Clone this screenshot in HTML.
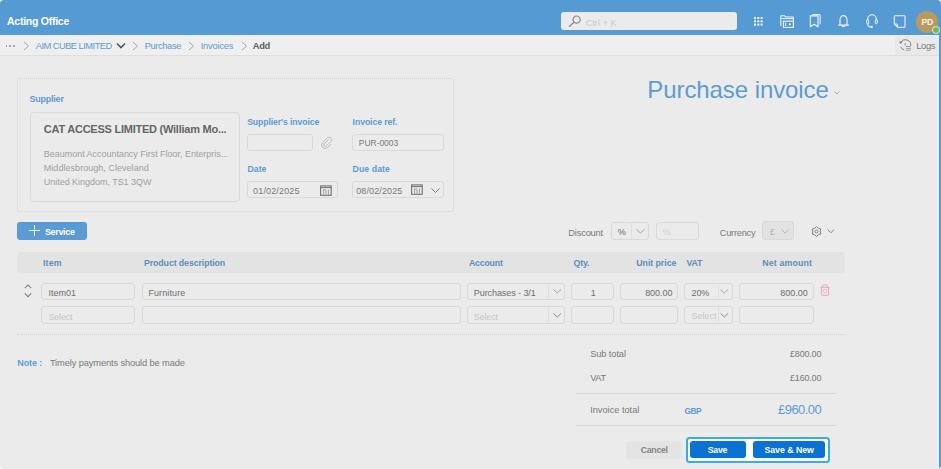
<!DOCTYPE html>
<html><head><meta charset="utf-8"><style>
html,body{margin:0;padding:0;}
body{width:941px;height:469px;overflow:hidden;background:#ffffff;font-family:"Liberation Sans",sans-serif;position:relative;}
.t{position:absolute;white-space:nowrap;}
.r{position:absolute;box-sizing:border-box;}
svg.r{overflow:visible;}
#pg{position:absolute;left:0;top:0;width:941px;height:469px;overflow:hidden;background:#ebebeb;border-radius:4px;}
</style></head><body><div id="pg">
<div class="r" style="left:0px;top:0px;width:941px;height:35px;background:#569ad3;"></div>
<div class="t" style="left:7.00px;top:16.00px;font-size:10.5px;line-height:10.5px;letter-spacing:-0.257px;color:#ffffff;font-weight:bold;">Acting Office</div>
<div class="r" style="left:561px;top:12.3px;width:176px;height:17.9px;background:#ebebeb;border-radius:3px;"></div>
<svg class="r" style="left:568px;top:15px" width="14" height="12" viewBox="0 0 14 12"><circle cx="8.6" cy="4.6" r="3.6" fill="none" stroke="#8a8a8a" stroke-width="1.2"/><line x1="6" y1="7.3" x2="1.5" y2="11.3" stroke="#8a8a8a" stroke-width="1.3" stroke-linecap="round"/></svg>
<div class="t" style="left:585.70px;top:19.00px;font-size:9px;line-height:9px;letter-spacing:0.093px;color:#c8c8c8;font-weight:normal;">Ctrl + K</div>
<svg class="r" style="left:753px;top:15.5px" width="11" height="11" viewBox="0 0 11 11"><rect x="1.0" y="1.0" width="2" height="2" fill="#f4f7fb"/><rect x="1.0" y="4.3" width="2" height="2" fill="#f4f7fb"/><rect x="1.0" y="7.6" width="2" height="2" fill="#f4f7fb"/><rect x="4.3" y="1.0" width="2" height="2" fill="#f4f7fb"/><rect x="4.3" y="4.3" width="2" height="2" fill="#f4f7fb"/><rect x="4.3" y="7.6" width="2" height="2" fill="#f4f7fb"/><rect x="7.6" y="1.0" width="2" height="2" fill="#f4f7fb"/><rect x="7.6" y="4.3" width="2" height="2" fill="#f4f7fb"/><rect x="7.6" y="7.6" width="2" height="2" fill="#f4f7fb"/></svg>
<svg class="r" style="left:779.5px;top:14.5px" width="15" height="13" viewBox="0 0 15 13"><path d="M0.8 11 V1.3 Q0.8 0.7 1.4 0.7 H4.3 L5.6 1.9 H12.6 Q13.4 1.9 13.4 2.7 V12.3" fill="none" stroke="#f4f7fb" stroke-width="1.05"/><line x1="1.6" y1="3.6" x2="13.4" y2="3.6" stroke="#f4f7fb" stroke-width="1"/><rect x="3.4" y="6.2" width="10" height="6.2" fill="none" stroke="#f4f7fb" stroke-width="1.05"/><line x1="5.6" y1="7.6" x2="5.6" y2="11" stroke="#f4f7fb" stroke-width="1"/><circle cx="9.8" cy="9.3" r="1" fill="#f4f7fb"/></svg>
<svg class="r" style="left:808.5px;top:14px" width="13" height="14" viewBox="0 0 13 14"><path d="M1.3 12.8 V1.9 H9 V12.8 L5.15 10.2 Z" fill="none" stroke="#f4f7fb" stroke-width="1.1" stroke-linejoin="round"/><path d="M3.2 0.6 H11.1 V10.3" fill="none" stroke="#f4f7fb" stroke-width="1"/></svg>
<svg class="r" style="left:837.5px;top:14.5px" width="11" height="13" viewBox="0 0 11 13"><path d="M2 10 V5 A3.5 4.4 0 0 1 9 5 V10" fill="none" stroke="#f4f7fb" stroke-width="1.1"/><line x1="0.6" y1="10.1" x2="10.4" y2="10.1" stroke="#f4f7fb" stroke-width="1.1" stroke-linecap="round"/><path d="M4 10.8 Q5.5 12.6 7 10.8" fill="none" stroke="#f4f7fb" stroke-width="1.1"/></svg>
<svg class="r" style="left:865.5px;top:13.5px" width="12" height="15" viewBox="0 0 12 15"><path d="M1.6 6.2 V5.2 A4.4 4.4 0 0 1 10.4 5.2 V6.2" fill="none" stroke="#f4f7fb" stroke-width="1.1"/><rect x="0.7" y="5.5" width="2" height="4.2" rx="1" fill="none" stroke="#f4f7fb" stroke-width="1"/><rect x="9.3" y="5.5" width="2" height="4.2" rx="1" fill="none" stroke="#f4f7fb" stroke-width="1"/><path d="M1.7 9.7 Q1.8 12.8 5 12.9" fill="none" stroke="#f4f7fb" stroke-width="1.1"/><circle cx="5.7" cy="12.9" r="1.1" fill="#f4f7fb"/></svg>
<svg class="r" style="left:893px;top:14.5px" width="13" height="13" viewBox="0 0 13 13"><path d="M1.3 1.6 Q1.3 0.8 2.1 0.8 H11.2 Q12 0.8 12 1.6 V11.4 Q12 12.2 11.2 12.2 H4.6 L1.3 8.9 Z" fill="none" stroke="#f4f7fb" stroke-width="1.05" stroke-linejoin="round"/><path d="M1.6 9 H3.8 Q4.4 9 4.4 9.6 V12" fill="none" stroke="#f4f7fb" stroke-width="1"/></svg>
<div class="r" style="left:916px;top:10.6px;width:22px;height:22.0px;background:#b89a5c;border-radius:50%;"></div>
<div class="t" style="left:921.44px;top:18.00px;font-size:8.6px;line-height:8.6px;letter-spacing:-0.219px;color:#f8f4ec;font-weight:bold;">PD</div>
<div class="r" style="left:932.1px;top:26.1px;width:7.899999999999977px;height:7.899999999999999px;background:#72bb44;border-radius:50%;border:1.4px solid #e3ece6;box-sizing:border-box;"></div>
<div class="r" style="left:0px;top:35px;width:939px;height:20px;background:#efefef;"></div>
<div class="r" style="left:0px;top:55px;width:939px;height:1px;background:#dedede;"></div>
<div class="r" style="left:895px;top:36px;width:44px;height:18.5px;background:#e9e9e9;"></div>
<div class="r" style="left:5.5px;top:45px;width:1.7000000000000002px;height:1.7000000000000028px;background:#9a9a9a;border-radius:50%;"></div>
<div class="r" style="left:9.3px;top:45px;width:1.6999999999999993px;height:1.7000000000000028px;background:#9a9a9a;border-radius:50%;"></div>
<div class="r" style="left:13.1px;top:45px;width:1.700000000000001px;height:1.7000000000000028px;background:#9a9a9a;border-radius:50%;"></div>
<svg class="r" style="left:22.5px;top:41px" width="7" height="10" viewBox="0 0 7 10"><path d="M1 1 L5.5 5 L1 9" fill="none" stroke="#a5a5a5" stroke-width="1"/></svg>
<div class="t" style="left:35.70px;top:42.00px;font-size:9.3px;line-height:9.3px;letter-spacing:-0.512px;color:#5c9bd2;font-weight:normal;">AIM CUBE LIMITED</div>
<svg class="r" style="left:115.5px;top:41.5px" width="10" height="8" viewBox="0 0 10 8"><path d="M1 1.5 L5 5.5 L9 1.5" fill="none" stroke="#555" stroke-width="1.6"/></svg>
<svg class="r" style="left:131.5px;top:41px" width="7" height="10" viewBox="0 0 7 10"><path d="M1 1 L5.5 5 L1 9" fill="none" stroke="#a5a5a5" stroke-width="1"/></svg>
<div class="t" style="left:144.70px;top:42.00px;font-size:9.3px;line-height:9.3px;letter-spacing:-0.372px;color:#5c9bd2;font-weight:normal;">Purchase</div>
<svg class="r" style="left:188px;top:41px" width="7" height="10" viewBox="0 0 7 10"><path d="M1 1 L5.5 5 L1 9" fill="none" stroke="#a5a5a5" stroke-width="1"/></svg>
<div class="t" style="left:200.70px;top:42.00px;font-size:9.3px;line-height:9.3px;letter-spacing:-0.188px;color:#5c9bd2;font-weight:normal;">Invoices</div>
<svg class="r" style="left:240.5px;top:41px" width="7" height="10" viewBox="0 0 7 10"><path d="M1 1 L5.5 5 L1 9" fill="none" stroke="#a5a5a5" stroke-width="1"/></svg>
<div class="t" style="left:252.80px;top:42.00px;font-size:9.3px;line-height:9.3px;letter-spacing:-0.291px;color:#606060;font-weight:bold;">Add</div>
<svg class="r" style="left:899px;top:39px" width="13" height="13" viewBox="0 0 13 13"><path d="M1.89 3.8 A5.2 5.2 0 0 1 11.72 6.9" fill="none" stroke="#808080" stroke-width="1"/><path d="M1.71 7.78 A5.2 5.2 0 0 0 5.25 11.02" fill="none" stroke="#808080" stroke-width="1"/><path d="M0.6 1.8 L3.2 3.7 L0.8 5.1 Z" fill="#7a7a7a"/><line x1="6.2" y1="4.2" x2="6.2" y2="6.8" stroke="#8a8a8a" stroke-width="0.9"/><line x1="7" y1="7.5" x2="11.8" y2="7.5" stroke="#8a8a8a" stroke-width="0.8"/><line x1="7" y1="9.4" x2="11.8" y2="9.4" stroke="#8a8a8a" stroke-width="0.8"/><line x1="7" y1="11.2" x2="11.8" y2="11.2" stroke="#8a8a8a" stroke-width="0.8"/></svg>
<div class="t" style="left:916.30px;top:42.00px;font-size:9.3px;line-height:9.3px;letter-spacing:-0.365px;color:#7a7a7a;font-weight:normal;">Logs</div>
<div class="r" style="left:17px;top:77.5px;width:437px;height:134.0px;border:1px dotted #d2d2d2;border-radius:3px;"></div>
<div class="t" style="left:29.40px;top:95.00px;font-size:9px;line-height:9px;letter-spacing:-0.213px;color:#5c9bd2;font-weight:bold;">Supplier</div>
<div class="r" style="left:30px;top:111.5px;width:210px;height:90.0px;border:1px solid #d8d8d8;border-radius:4px;"></div>
<div class="t" style="left:43.80px;top:124.00px;font-size:11px;line-height:11px;letter-spacing:-0.242px;color:#666666;font-weight:bold;">CAT ACCESS LIMITED (William Mo...</div>
<div class="t" style="left:43.80px;top:150.00px;font-size:9px;line-height:9px;letter-spacing:-0.028px;color:#a0a0a0;font-weight:normal;">Beaumont Accountancy First Floor, Enterpris...</div>
<div class="t" style="left:43.80px;top:164.00px;font-size:9px;line-height:9px;letter-spacing:0.039px;color:#a0a0a0;font-weight:normal;">Middlesbrough, Cleveland</div>
<div class="t" style="left:43.80px;top:178.00px;font-size:9px;line-height:9px;letter-spacing:-0.032px;color:#a0a0a0;font-weight:normal;">United Kingdom, TS1 3QW</div>
<div class="t" style="left:247.20px;top:118.00px;font-size:8.7px;line-height:8.7px;letter-spacing:-0.111px;color:#5c9bd2;font-weight:bold;">Supplier's invoice</div>
<div class="r" style="left:247px;top:134px;width:65.5px;height:17px;border:1px solid #d9d9d9;border-radius:3px;"></div>
<svg class="r" style="left:320.5px;top:136.5px" width="12" height="12" viewBox="0 0 12 12"><path d="M7.5 2.5 L3 7 A1.6 1.6 0 0 0 5.2 9.2 L10 4.4 A2.6 2.6 0 0 0 6.3 0.8 L1.6 5.5 A3.5 3.5 0 0 0 6.6 10.5 L10 7" fill="none" stroke="#bcbcbc" stroke-width="1"/></svg>
<div class="t" style="left:352.60px;top:118.00px;font-size:8.7px;line-height:8.7px;letter-spacing:-0.089px;color:#5c9bd2;font-weight:bold;">Invoice ref.</div>
<div class="r" style="left:352px;top:134px;width:91.5px;height:17px;border:1px solid #d9d9d9;border-radius:3px;"></div>
<div class="t" style="left:358.80px;top:139.00px;font-size:8.5px;line-height:8.5px;letter-spacing:-0.036px;color:#7a7a7a;font-weight:normal;">PUR-0003</div>
<div class="t" style="left:247.60px;top:165.00px;font-size:8.7px;line-height:8.7px;letter-spacing:-0.032px;color:#5c9bd2;font-weight:bold;">Date</div>
<div class="r" style="left:247px;top:181px;width:90.5px;height:17px;border:1px solid #d9d9d9;border-radius:3px;"></div>
<div class="t" style="left:253.10px;top:187.00px;font-size:9px;line-height:9px;letter-spacing:0.146px;color:#7a7a7a;font-weight:normal;">01/02/2025</div>
<svg class="r" style="left:320px;top:184.5px" width="12" height="11" viewBox="0 0 12 11"><rect x="0.6" y="0.9" width="10.6" height="9.4" fill="none" stroke="#707070" stroke-width="1.1"/><line x1="0.6" y1="2.6" x2="11.2" y2="2.6" stroke="#707070" stroke-width="1"/><line x1="3.6" y1="4.6" x2="3.6" y2="9.6" stroke="#8a8a8a" stroke-width="0.8"/><line x1="6" y1="5.4" x2="6" y2="9.6" stroke="#8a8a8a" stroke-width="0.8"/><line x1="8.4" y1="4.6" x2="8.4" y2="9.6" stroke="#8a8a8a" stroke-width="0.8"/><line x1="3.6" y1="4.8" x2="6" y2="4.8" stroke="#8a8a8a" stroke-width="0.7"/></svg>
<div class="t" style="left:352.60px;top:165.00px;font-size:8.7px;line-height:8.7px;letter-spacing:0.089px;color:#5c9bd2;font-weight:bold;">Due date</div>
<div class="r" style="left:352px;top:181px;width:91.5px;height:17px;border:1px solid #d9d9d9;border-radius:3px;"></div>
<div class="t" style="left:356.20px;top:187.00px;font-size:9px;line-height:9px;letter-spacing:0.116px;color:#7a7a7a;font-weight:normal;">08/02/2025</div>
<svg class="r" style="left:410.5px;top:184px" width="12" height="11" viewBox="0 0 12 11"><rect x="0.6" y="0.9" width="10.6" height="9.4" fill="none" stroke="#707070" stroke-width="1.1"/><line x1="0.6" y1="2.6" x2="11.2" y2="2.6" stroke="#707070" stroke-width="1"/><line x1="3.6" y1="4.6" x2="3.6" y2="9.6" stroke="#8a8a8a" stroke-width="0.8"/><line x1="6" y1="5.4" x2="6" y2="9.6" stroke="#8a8a8a" stroke-width="0.8"/><line x1="8.4" y1="4.6" x2="8.4" y2="9.6" stroke="#8a8a8a" stroke-width="0.8"/><line x1="3.6" y1="4.8" x2="6" y2="4.8" stroke="#8a8a8a" stroke-width="0.7"/></svg>
<svg class="r" style="left:430.5px;top:188px" width="9" height="5" viewBox="0 0 9 5"><path d="M0.5 0.5 L4.5 4.5 L8.5 0.5" fill="none" stroke="#7a7a7a" stroke-width="1"/></svg>
<div class="t" style="left:647.30px;top:78.00px;font-size:24px;line-height:24px;letter-spacing:-0.079px;color:#5d9bd0;font-weight:normal;">Purchase invoice</div>
<svg class="r" style="left:834px;top:91.2px" width="6" height="3.5" viewBox="0 0 6 3.5"><path d="M0.5 0.5 L3.0 3.0 L5.5 0.5" fill="none" stroke="#a0a0a0" stroke-width="0.9"/></svg>
<div class="r" style="left:17px;top:221.5px;width:70px;height:18.5px;background:#5a9bd5;border-radius:3px;"></div>
<div class="r" style="left:33.6px;top:225.3px;width:0.8999999999999986px;height:11.0px;background:#e8f0f8;"></div>
<div class="r" style="left:28.5px;top:230.3px;width:11.200000000000003px;height:0.8999999999999773px;background:#e8f0f8;"></div>
<div class="t" style="left:44.90px;top:228.00px;font-size:9px;line-height:9px;letter-spacing:-0.332px;color:#ffffff;font-weight:bold;">Service</div>
<div class="t" style="left:568.30px;top:229.00px;font-size:9.3px;line-height:9.3px;letter-spacing:-0.184px;color:#7a7a7a;font-weight:normal;">Discount</div>
<div class="r" style="left:610.5px;top:221.5px;width:38.5px;height:18.19999999999999px;border:1px solid #d9d9d9;border-radius:3px;"></div>
<div class="r" style="left:631.2px;top:222.5px;width:1.0px;height:16.19999999999999px;background:#dedede;"></div>
<div class="t" style="left:617.70px;top:228.00px;font-size:9px;line-height:9px;letter-spacing:-0.302px;color:#6a6a6a;font-weight:normal;">%</div>
<svg class="r" style="left:635.7px;top:229.3px" width="9" height="4.5" viewBox="0 0 9 4.5"><path d="M0.5 0.5 L4.5 4.0 L8.5 0.5" fill="none" stroke="#a8a8a8" stroke-width="1"/></svg>
<div class="r" style="left:656px;top:222px;width:42.5px;height:17.69999999999999px;border:1px solid #d9d9d9;border-radius:3px;"></div>
<div class="t" style="left:662.80px;top:228.00px;font-size:9px;line-height:9px;letter-spacing:-0.802px;color:#cfcfcf;font-weight:normal;">%</div>
<div class="t" style="left:719.70px;top:229.00px;font-size:9.3px;line-height:9.3px;letter-spacing:-0.252px;color:#7a7a7a;font-weight:normal;">Currency</div>
<div class="r" style="left:762.4px;top:221.3px;width:32.10000000000002px;height:18.299999999999983px;background:#e2e2e2;border:1px solid #d9d9d9;border-radius:3px;"></div>
<div class="t" style="left:770.00px;top:228.00px;font-size:9px;line-height:9px;letter-spacing:0.495px;color:#b0b0b0;font-weight:normal;">£</div>
<svg class="r" style="left:781.4px;top:229.3px" width="8.2" height="4.5" viewBox="0 0 8.2 4.5"><path d="M0.5 0.5 L4.1 4.0 L7.699999999999999 0.5" fill="none" stroke="#b5b5b5" stroke-width="1"/></svg>
<svg class="r" style="left:810.6px;top:225.8px" width="11" height="11" viewBox="0 0 11 11"><path d="M5.50 0.50 L7.35 2.30 L9.83 3.00 L9.20 5.50 L9.83 8.00 L7.35 8.70 L5.50 10.50 L3.65 8.70 L1.17 8.00 L1.80 5.50 L1.17 3.00 L3.65 2.30 Z" fill="none" stroke="#7e7e7e" stroke-width="1" stroke-linejoin="round"/><circle cx="5.5" cy="5.5" r="1.5" fill="none" stroke="#7e7e7e" stroke-width="0.9"/></svg>
<svg class="r" style="left:827.3px;top:229px" width="7.8" height="4.2" viewBox="0 0 7.8 4.2"><path d="M0.5 0.5 L3.9 3.7 L7.3 0.5" fill="none" stroke="#8a8a8a" stroke-width="1"/></svg>
<div class="r" style="left:17px;top:252px;width:828px;height:20.5px;background:#e3e3e3;border-radius:4px;"></div>
<div class="t" style="left:43.00px;top:259.00px;font-size:8.8px;line-height:8.8px;letter-spacing:0.178px;color:#5b8fbd;font-weight:bold;">Item</div>
<div class="t" style="left:144.00px;top:259.00px;font-size:8.8px;line-height:8.8px;letter-spacing:-0.105px;color:#5b8fbd;font-weight:bold;">Product description</div>
<div class="t" style="left:468.90px;top:259.00px;font-size:8.8px;line-height:8.8px;letter-spacing:-0.198px;color:#5b8fbd;font-weight:bold;">Account</div>
<div class="t" style="left:573.60px;top:259.00px;font-size:8.8px;line-height:8.8px;letter-spacing:-0.164px;color:#5b8fbd;font-weight:bold;">Qty.</div>
<div class="t" style="left:636.30px;top:259.00px;font-size:8.8px;line-height:8.8px;letter-spacing:-0.057px;color:#5b8fbd;font-weight:bold;">Unit price</div>
<div class="t" style="left:686.50px;top:259.00px;font-size:8.8px;line-height:8.8px;letter-spacing:-0.163px;color:#5b8fbd;font-weight:bold;">VAT</div>
<div class="t" style="left:762.30px;top:259.00px;font-size:8.8px;line-height:8.8px;letter-spacing:0.132px;color:#5b8fbd;font-weight:bold;">Net amount</div>
<svg class="r" style="left:23.5px;top:283.5px" width="8" height="14" viewBox="0 0 8 14"><path d="M0.8 4.2 L4 0.9 L7.2 4.2" fill="none" stroke="#7e7e7e" stroke-width="1.05"/><path d="M0.8 9.4 L4 12.7 L7.2 9.4" fill="none" stroke="#7e7e7e" stroke-width="1.05"/></svg>
<div class="r" style="left:41.3px;top:282.5px;width:94.10000000000001px;height:17.5px;border:1px solid #d9d9d9;border-radius:3px;"></div>
<div class="r" style="left:142px;top:282.5px;width:318.6px;height:17.5px;border:1px solid #d9d9d9;border-radius:3px;"></div>
<div class="r" style="left:466.7px;top:282.5px;width:98.50000000000006px;height:17.5px;border:1px solid #d9d9d9;border-radius:3px;"></div>
<div class="r" style="left:547.5px;top:283.5px;width:1.0px;height:15.5px;background:#e0e0e0;"></div>
<div class="r" style="left:571.1px;top:282.5px;width:42.799999999999955px;height:17.5px;border:1px solid #d9d9d9;border-radius:3px;"></div>
<div class="r" style="left:619.7px;top:282.5px;width:58.69999999999993px;height:17.5px;border:1px solid #d9d9d9;border-radius:3px;"></div>
<div class="r" style="left:684px;top:282.5px;width:49px;height:17.5px;border:1px solid #d9d9d9;border-radius:3px;"></div>
<div class="r" style="left:718px;top:283.5px;width:1px;height:15.5px;background:#e0e0e0;"></div>
<div class="r" style="left:738.8px;top:282.5px;width:75.70000000000005px;height:17.5px;border:1px solid #d9d9d9;border-radius:3px;"></div>
<div class="r" style="left:41.3px;top:306.3px;width:94.10000000000001px;height:17.899999999999977px;border:1px solid #d9d9d9;border-radius:3px;"></div>
<div class="r" style="left:142px;top:306.3px;width:318.6px;height:17.899999999999977px;border:1px solid #d9d9d9;border-radius:3px;"></div>
<div class="r" style="left:466.7px;top:306.3px;width:98.50000000000006px;height:17.899999999999977px;border:1px solid #d9d9d9;border-radius:3px;"></div>
<div class="r" style="left:547.5px;top:307.3px;width:1.0px;height:15.899999999999977px;background:#e0e0e0;"></div>
<div class="r" style="left:571.1px;top:306.3px;width:42.799999999999955px;height:17.899999999999977px;border:1px solid #d9d9d9;border-radius:3px;"></div>
<div class="r" style="left:619.7px;top:306.3px;width:58.69999999999993px;height:17.899999999999977px;border:1px solid #d9d9d9;border-radius:3px;"></div>
<div class="r" style="left:684px;top:306.3px;width:49px;height:17.899999999999977px;border:1px solid #d9d9d9;border-radius:3px;"></div>
<div class="r" style="left:718px;top:307.3px;width:1px;height:15.899999999999977px;background:#e0e0e0;"></div>
<div class="r" style="left:738.8px;top:306.3px;width:75.70000000000005px;height:17.899999999999977px;border:1px solid #d9d9d9;border-radius:3px;"></div>
<div class="t" style="left:48.40px;top:289.00px;font-size:9px;line-height:9px;letter-spacing:0.014px;color:#6e6e6e;font-weight:normal;">Item01</div>
<div class="t" style="left:148.40px;top:289.00px;font-size:9px;line-height:9px;letter-spacing:0.110px;color:#6e6e6e;font-weight:normal;">Furniture</div>
<div class="t" style="left:473.80px;top:289.00px;font-size:9px;line-height:9px;letter-spacing:-0.075px;color:#6e6e6e;font-weight:normal;">Purchases - 3/1</div>
<svg class="r" style="left:552.8px;top:289px" width="8.5" height="4.5" viewBox="0 0 8.5 4.5"><path d="M0.5 0.5 L4.25 4.0 L8.0 0.5" fill="none" stroke="#a8a8a8" stroke-width="1"/></svg>
<div class="t" style="left:590.70px;top:289.00px;font-size:9px;line-height:9px;letter-spacing:-1.005px;color:#6e6e6e;font-weight:normal;">1</div>
<div class="t" style="left:645.16px;top:289.00px;font-size:9px;line-height:9px;letter-spacing:-0.038px;color:#6e6e6e;font-weight:normal;">800.00</div>
<div class="t" style="left:691.60px;top:289.00px;font-size:9px;line-height:9px;letter-spacing:-0.204px;color:#6e6e6e;font-weight:normal;">20%</div>
<svg class="r" style="left:720px;top:289px" width="8.6" height="4.5" viewBox="0 0 8.6 4.5"><path d="M0.5 0.5 L4.3 4.0 L8.1 0.5" fill="none" stroke="#a8a8a8" stroke-width="1"/></svg>
<div class="t" style="left:780.36px;top:289.00px;font-size:9px;line-height:9px;letter-spacing:-0.038px;color:#6e6e6e;font-weight:normal;">800.00</div>
<svg class="r" style="left:820px;top:284px" width="10" height="12" viewBox="0 0 10 12"><line x1="0.4" y1="3.3" x2="9.6" y2="3.3" stroke="#eca6b6" stroke-width="1"/><path d="M2.7 3.1 V1.6 Q2.7 0.9 3.4 0.9 H6.6 Q7.3 0.9 7.3 1.6 V3.1" fill="none" stroke="#eca6b6" stroke-width="0.9"/><path d="M1.4 3.4 V10.3 Q1.4 11.3 2.4 11.3 H7.6 Q8.6 11.3 8.6 10.3 V3.4" fill="none" stroke="#eca6b6" stroke-width="1"/><rect x="3.6" y="5.6" width="2.8" height="2.8" fill="none" stroke="#efb4c2" stroke-width="0.8"/></svg>
<div class="t" style="left:48.40px;top:313.00px;font-size:9px;line-height:9px;letter-spacing:-0.169px;color:#c8c8c8;font-weight:normal;">Select</div>
<div class="t" style="left:473.80px;top:313.00px;font-size:9px;line-height:9px;letter-spacing:-0.169px;color:#c8c8c8;font-weight:normal;">Select</div>
<svg class="r" style="left:552.8px;top:313px" width="8.5" height="4.5" viewBox="0 0 8.5 4.5"><path d="M0.5 0.5 L4.25 4.0 L8.0 0.5" fill="none" stroke="#8a8a8a" stroke-width="1"/></svg>
<div class="t" style="left:684px;top:306.3px;width:34px;height:18px;overflow:hidden;"><div class="t" style="left:7.6px;top:5.5px;font-size:9px;line-height:9px;color:#c8c8c8;letter-spacing:0px">Select</div></div>
<svg class="r" style="left:720px;top:313px" width="8.6" height="4.5" viewBox="0 0 8.6 4.5"><path d="M0.5 0.5 L4.3 4.0 L8.1 0.5" fill="none" stroke="#8a8a8a" stroke-width="1"/></svg>
<div class="r" style="left:17px;top:334px;width:828px;height:1px;border-top:1px dotted #d2d2d2;"></div>
<div class="t" style="left:17.30px;top:359.00px;font-size:9px;line-height:9px;letter-spacing:-0.100px;color:#5c9bd2;font-weight:bold;">Note :</div>
<div class="t" style="left:49.90px;top:359.00px;font-size:9.3px;line-height:9.3px;letter-spacing:-0.122px;color:#7a7a7a;font-weight:normal;">Timely payments should be made</div>
<div class="t" style="left:590.20px;top:350.00px;font-size:9.3px;line-height:9.3px;letter-spacing:-0.111px;color:#7a7a7a;font-weight:normal;">Sub total</div>
<div class="t" style="left:790.01px;top:350.00px;font-size:9px;line-height:9px;letter-spacing:-0.190px;color:#7a7a7a;font-weight:normal;">£800.00</div>
<div class="t" style="left:590.20px;top:374.00px;font-size:9.3px;line-height:9.3px;letter-spacing:-0.400px;color:#7a7a7a;font-weight:normal;">VAT</div>
<div class="t" style="left:790.01px;top:374.00px;font-size:9px;line-height:9px;letter-spacing:-0.190px;color:#7a7a7a;font-weight:normal;">£160.00</div>
<div class="r" style="left:576px;top:393px;width:260px;height:1px;background:#d6d6d6;"></div>
<div class="t" style="left:590.20px;top:406.00px;font-size:9.3px;line-height:9.3px;letter-spacing:-0.039px;color:#7a7a7a;font-weight:normal;">Invoice total</div>
<div class="t" style="left:684.50px;top:407.00px;font-size:8.3px;line-height:8.3px;letter-spacing:-0.493px;color:#5c9bd2;font-weight:bold;">GBP</div>
<div class="t" style="left:778.06px;top:403.00px;font-size:13px;line-height:13px;letter-spacing:-0.542px;color:#5c9bd2;font-weight:normal;">£960.00</div>
<div class="r" style="left:576px;top:425.3px;width:260px;height:1.0px;background:#d6d6d6;"></div>
<div class="r" style="left:625.8px;top:440.8px;width:56.60000000000002px;height:17.899999999999977px;background:#e4e4e4;border-radius:3px;"></div>
<div class="t" style="left:640.80px;top:446.00px;font-size:8.8px;line-height:8.8px;letter-spacing:-0.341px;color:#858585;font-weight:bold;">Cancel</div>
<div class="r" style="left:686px;top:436.5px;width:143.5px;height:26.0px;border:2px solid #38aedc;border-radius:3.5px;background:#fbfdfe;"></div>
<div class="r" style="left:690.3px;top:440.8px;width:55.700000000000045px;height:17.399999999999977px;background:#0b71d3;border-radius:3px;"></div>
<div class="t" style="left:707.68px;top:446.00px;font-size:8.8px;line-height:8.8px;letter-spacing:-0.236px;color:#ffffff;font-weight:bold;">Save</div>
<div class="r" style="left:753.2px;top:440.8px;width:71.79999999999995px;height:17.399999999999977px;background:#0b71d3;border-radius:3px;"></div>
<div class="t" style="left:764.43px;top:446.00px;font-size:8.8px;line-height:8.8px;letter-spacing:-0.037px;color:#ffffff;font-weight:bold;">Save &amp; New</div>
<div class="r" style="left:939px;top:35px;width:2px;height:434px;background:#569ad3;"></div>
</div></body></html>
